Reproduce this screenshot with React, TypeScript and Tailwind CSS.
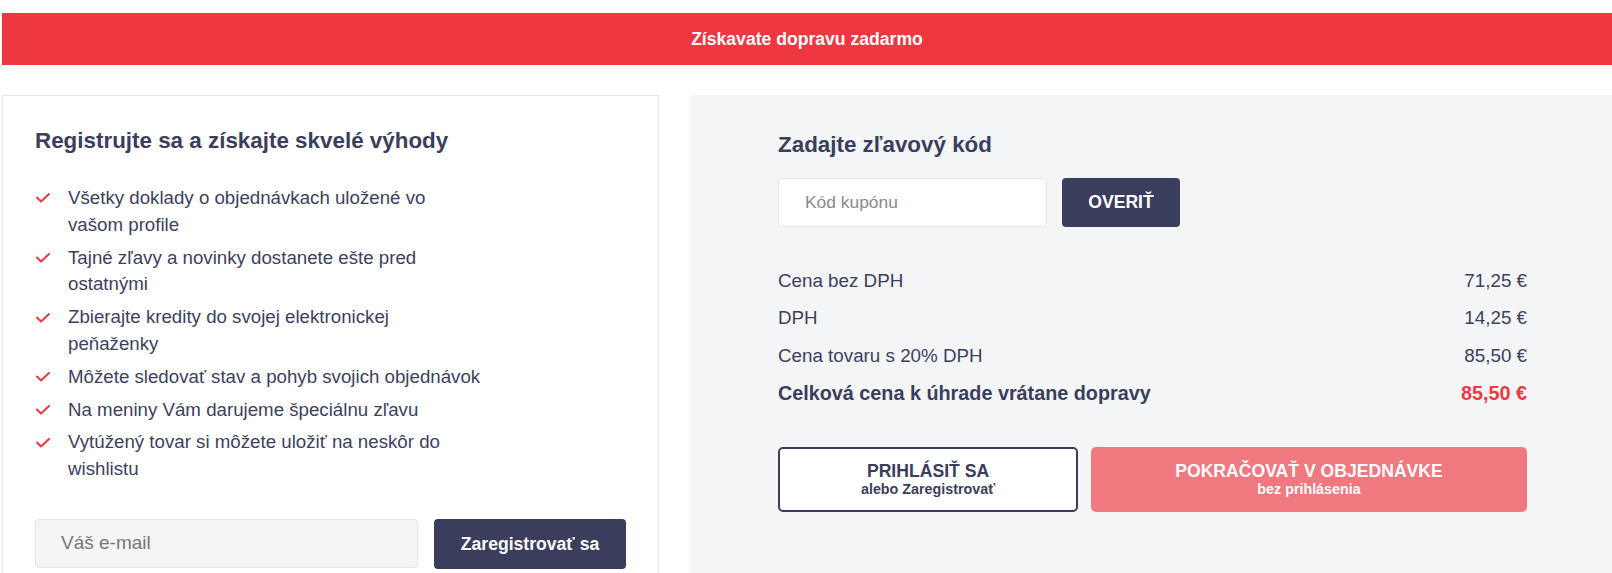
import React from 'react';

const benefits = [
  'Všetky doklady o objednávkach uložené vo vašom profile',
  'Tajné zľavy a novinky dostanete ešte pred ostatnými',
  'Zbierajte kredity do svojej elektronickej peňaženky',
  'Môžete sledovať stav a pohyb svojich objednávok',
  'Na meniny Vám darujeme špeciálnu zľavu',
  'Vytúžený tovar si môžete uložiť na neskôr do wishlistu',
];

const rows = [
  { label: 'Cena bez DPH', value: '71,25 €' },
  { label: 'DPH', value: '14,25 €' },
  { label: 'Cena tovaru s 20% DPH', value: '85,50 €' },
];

function Check() {
  return (
    <svg width="14" height="10" viewBox="0 0 14 10" fill="none" className="shrink-0">
      <path d="M1 4.5 L5 8.5 L13 1" stroke="#ee3942" strokeWidth="2" strokeLinecap="round" strokeLinejoin="round" />
    </svg>
  );
}

export default function App() {
  return (
    <div className="min-h-screen bg-white pt-[13px] pl-[2px] text-[#3b3d5c]" style={{ fontFamily: '"Liberation Sans", Arial, sans-serif' }}>
      {/* Banner */}
      <div className="h-[52px] bg-[#ee3741] flex items-center justify-center">
        <span className="text-white font-bold text-[17.6px]">Získavate dopravu zadarmo</span>
      </div>

      <div className="mt-[30px] flex">
        {/* Register card */}
        <div className="w-[657px] shrink-0 border border-[#e5e5e5] p-[32px]">
          <h2 className="text-[22.4px] leading-[26px] font-bold text-[#3b3d5c]">
            Registrujte sa a získajte skvelé výhody
          </h2>
          <ul className="mt-[31px] space-y-[6px]">
            {benefits.map((b) => (
              <li key={b} className="flex text-[18.7px] leading-[26.8px] text-[#3d3f5e]">
                <div className="w-[33px] h-[26.8px] flex items-center pl-px shrink-0">
                  <Check />
                </div>
                <span className="max-w-[416px]">{b}</span>
              </li>
            ))}
          </ul>
          <div className="mt-[36px] flex gap-[16px]">
            <input
              placeholder="Váš e-mail"
              className="w-[383px] h-[49px] rounded-[4px] border border-[#e5e5e5] bg-[#f5f5f5] pl-[25px] text-[19px] placeholder:text-[#777] outline-none"
            />
            <button className="w-[192px] h-[50px] rounded-[4px] bg-[#3b3d5c] text-white font-bold text-[17.6px]">
              Zaregistrovať sa
            </button>
          </div>
        </div>

        {/* Summary panel */}
        <div className="ml-[31px] flex-1 bg-[#f4f5f7] pt-[37px] pl-[88px] pb-10">
          <div className="w-[749px]">
            <h2 className="text-[22.4px] leading-[26px] font-bold text-[#3b3d5c]">Zadajte zľavový kód</h2>
            <div className="mt-[20px] flex gap-[15px]">
              <input
                placeholder="Kód kupónu"
                className="w-[269px] h-[49px] rounded-[4px] border border-[#e6e6e6] bg-white pl-[26px] text-[17.4px] placeholder:text-[#8a8a8a] outline-none"
              />
              <button className="w-[118px] h-[49px] rounded-[4px] bg-[#3b3d5c] text-white font-bold text-[17.6px]">
                OVERIŤ
              </button>
            </div>

            <div className="mt-[41px] space-y-[11px] text-[18.8px] leading-[26.4px] text-[#3d3f5e]">
              {rows.map((r) => (
                <div key={r.label} className="flex justify-between">
                  <span>{r.label}</span>
                  <span>{r.value}</span>
                </div>
              ))}
              <div className="flex justify-between font-bold text-[19.8px] text-[#3b3d5c]">
                <span>Celková cena k úhrade vrátane dopravy</span>
                <span className="text-[#ee3942]">85,50 €</span>
              </div>
            </div>

            <div className="mt-[40px] flex gap-[13px]">
              <button className="w-[300px] h-[65px] rounded-[5px] border-2 border-[#3b3d5c] bg-white flex flex-col items-center justify-center font-bold text-[#3b3d5c]">
                <span className="text-[17.6px] leading-[20px]">PRIHLÁSIŤ SA</span>
                <span className="text-[14.3px] leading-[17px]">alebo Zaregistrovať</span>
              </button>
              <button className="w-[436px] h-[65px] rounded-[5px] bg-[#f07980] flex flex-col items-center justify-center font-bold text-white">
                <span className="text-[17.6px] leading-[20px]">POKRAČOVAŤ V OBJEDNÁVKE</span>
                <span className="text-[14.3px] leading-[17px]">bez prihlásenia</span>
              </button>
            </div>
          </div>
        </div>
      </div>
    </div>
  );
}
